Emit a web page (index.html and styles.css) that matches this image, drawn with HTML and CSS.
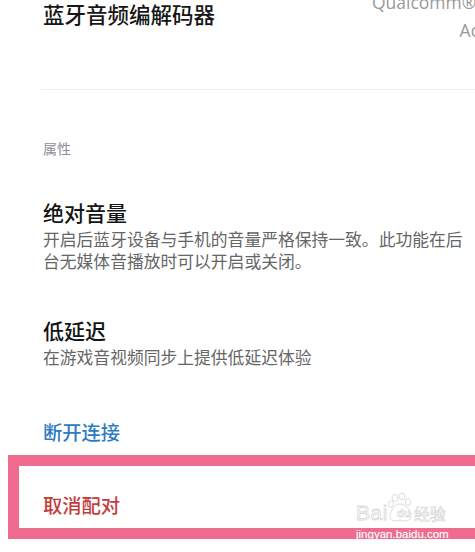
FILE: index.html
```html
<!DOCTYPE html>
<html lang="zh-CN">
<head>
<meta charset="utf-8">
<title>蓝牙设备详情</title>
<link rel="stylesheet" href="styles.css">
</head>
<body>
<div class="page">
  <div class="codec-row">
    <div class="codec-title">蓝牙音频编解码器</div>
    <div class="codec-value">Qualcomm® aptX™<br>Adaptive</div>
  </div>
  <div class="divider"></div>

  <div class="section-label">属性</div>

  <div class="item item-first">
    <div class="item-title">绝对音量</div>
    <div class="item-desc">开启后蓝牙设备与手机的音量严格保持一致。此功能在后台无媒体音播放时可以开启或关闭。</div>
  </div>

  <div class="item item-second">
    <div class="item-title">低延迟</div>
    <div class="item-desc">在游戏音视频同步上提供低延迟体验</div>
  </div>

  <div class="action action-blue">断开连接</div>

  <div class="highlight">
    <div class="action action-red">取消配对</div>
  </div>
</div>

<div class="watermark">
  <div class="wm-logo">
    <span class="wm-bai">Bai</span>
    <svg class="wm-paw" width="26" height="30" viewBox="0 0 26 30">
      <g fill="#fff" stroke="#dcdcdc" stroke-width="1">
        <ellipse cx="7" cy="5" rx="3" ry="3.6"/>
        <ellipse cx="14" cy="3.5" rx="3" ry="3.2"/>
        <ellipse cx="3" cy="11" rx="2.6" ry="3.2"/>
        <ellipse cx="20" cy="9" rx="2.8" ry="3.4"/>
        <path d="M12 11 C6 11 2 19 2 23 C2 28 7 29 12 27 C17 29 23 28 23 23 C23 18 18 11 12 11 Z"/>
      </g>
    </svg>
    <span class="wm-du">du</span>
    <span class="wm-jy">经验</span>
  </div>
  <div class="wm-url">jingyan.baidu.com</div>
</div>
</body>
</html>
```

FILE: styles.css
```css
html, body {
  margin: 0;
  padding: 0;
  background: #ffffff;
  overflow: hidden;
}

body {
  width: 475px;
  height: 552px;
  position: relative;
  font-family: "Noto Sans CJK SC", "Noto Sans", sans-serif;
}

.page {
  padding-left: 43px;
}

.codec-row {
  display: flex;
  justify-content: space-between;
  align-items: flex-start;
  height: 89px;
}

.codec-title {
  font-size: 21.5px;
  line-height: 28px;
  font-weight: 500;
  color: #161616;
}

.codec-value {
  margin-top: -12px;
  margin-right: -56px;
  font-family: "Open Sans", "Noto Sans", sans-serif;
  font-size: 17.5px;
  line-height: 28px;
  color: #9a9a9a;
  text-align: right;
  white-space: nowrap;
}

.divider {
  height: 1px;
  margin-left: -2px;
  background: #ececec;
}

.section-label {
  margin-top: 48px;
  font-size: 14px;
  line-height: 20px;
  color: #8e8e96;
}

.item-title {
  font-size: 21px;
  line-height: 28px;
  font-weight: 500;
  color: #141414;
}

.item-desc {
  margin-top: 2px;
  padding-right: 4px;
  font-size: 16.8px;
  line-height: 22px;
  color: #666666;
}

.item-first {
  margin-top: 40px;
}

.item-second {
  margin-top: 44px;
}

.action {
  font-size: 19.3px;
  line-height: 26px;
  font-weight: 500;
}

.action-blue {
  margin-top: 51px;
  color: #2d7cbf;
}

.highlight {
  box-sizing: border-box;
  margin-top: 10px;
  margin-left: -35px;
  margin-right: -20px;
  height: 84px;
  border: 11px solid #ef6b90;
  padding-left: 24px;
  padding-top: 26px;
}

.action-red {
  color: #c23c3c;
}

.watermark {
  position: absolute;
  left: 356px;
  top: 492px;
  width: 92px;
  color: #ffffff;
}

.wm-logo {
  display: flex;
  align-items: flex-end;
  height: 32px;
  position: relative;
}

.wm-bai {
  font-family: "Liberation Sans", sans-serif;
  font-size: 21px;
  line-height: 22px;
  color: #fff;
  -webkit-text-stroke: 0.8px #d8d8d8;
  letter-spacing: 0.5px;
}

.wm-paw {
  margin-bottom: 1px;
}

.wm-du {
  position: absolute;
  left: 41px;
  top: 15px;
  font-family: "Liberation Sans", sans-serif;
  font-size: 11px;
  font-weight: bold;
  color: #fff;
  -webkit-text-stroke: 0.6px #d2d2d2;
}

.wm-jy {
  font-size: 16px;
  line-height: 22px;
  color: #fff;
  -webkit-text-stroke: 0.7px #d8d8d8;
}

.wm-url {
  margin-top: 4px;
  font-family: "Liberation Sans", sans-serif;
  font-size: 11.5px;
  line-height: 13px;
  color: #ffffff;
  text-shadow: 0 0 1px #e4a3b6;
}
```
